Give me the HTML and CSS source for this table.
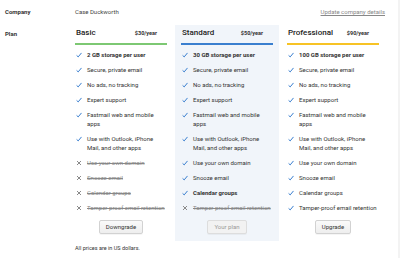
FILE: index.html
```html
<!DOCTYPE html>
<html lang="en">
<head>
    <meta charset="UTF-8">
    <meta name="viewport" content="width=device-width, initial-scale=1.0">
    <title>Plan - Fastmail</title>
    <link rel="stylesheet" href="styles.css">
</head>
<body>
    <div class="page">
        <div class="content">
            <div class="row company-row">
                <div class="label">Company</div>
                <div class="value">Case Duckworth</div>
                <a class="update-link" href="#">Update company details</a>
            </div>

            <div class="row plan-row">
                <div class="label plan-label">Plan</div>
                <div class="plans">
                    <div class="plan basic">
                        <div class="plan-head">
                            <span class="plan-name">Basic</span>
                            <span class="plan-price">$30/year</span>
                        </div>
                        <ul class="features">
                            <li class="yes strong"><svg viewBox="0 0 6 6"><path d="M0.6 3.4 L2.2 4.9 L5.5 0.9"/></svg>2 GB storage per user</li>
                            <li class="yes"><svg viewBox="0 0 6 6"><path d="M0.6 3.4 L2.2 4.9 L5.5 0.9"/></svg>Secure, private email</li>
                            <li class="yes"><svg viewBox="0 0 6 6"><path d="M0.6 3.4 L2.2 4.9 L5.5 0.9"/></svg>No ads, no tracking</li>
                            <li class="yes"><svg viewBox="0 0 6 6"><path d="M0.6 3.4 L2.2 4.9 L5.5 0.9"/></svg>Expert support</li>
                            <li class="yes"><svg viewBox="0 0 6 6"><path d="M0.6 3.4 L2.2 4.9 L5.5 0.9"/></svg><span>Fastmail web and mobile<br>apps</span></li>
                            <li class="yes"><svg viewBox="0 0 6 6"><path d="M0.6 3.4 L2.2 4.9 L5.5 0.9"/></svg><span>Use with Outlook, iPhone<br>Mail, and other apps</span></li>
                            <li class="no"><svg viewBox="0 0 6 6"><path d="M1 1 L5 5 M5 1 L1 5"/></svg><span>Use your own domain</span></li>
                            <li class="no"><svg viewBox="0 0 6 6"><path d="M1 1 L5 5 M5 1 L1 5"/></svg><span>Snooze email</span></li>
                            <li class="no"><svg viewBox="0 0 6 6"><path d="M1 1 L5 5 M5 1 L1 5"/></svg><span>Calendar groups</span></li>
                            <li class="no"><svg viewBox="0 0 6 6"><path d="M1 1 L5 5 M5 1 L1 5"/></svg><span>Tamper-proof email retention</span></li>
                        </ul>
                        <div class="plan-action">
                            <button class="plan-button">Downgrade</button>
                        </div>
                    </div>

                    <div class="plan standard current">
                        <div class="plan-head">
                            <span class="plan-name">Standard</span>
                            <span class="plan-price">$50/year</span>
                        </div>
                        <ul class="features">
                            <li class="yes strong"><svg viewBox="0 0 6 6"><path d="M0.6 3.4 L2.2 4.9 L5.5 0.9"/></svg>30 GB storage per user</li>
                            <li class="yes"><svg viewBox="0 0 6 6"><path d="M0.6 3.4 L2.2 4.9 L5.5 0.9"/></svg>Secure, private email</li>
                            <li class="yes"><svg viewBox="0 0 6 6"><path d="M0.6 3.4 L2.2 4.9 L5.5 0.9"/></svg>No ads, no tracking</li>
                            <li class="yes"><svg viewBox="0 0 6 6"><path d="M0.6 3.4 L2.2 4.9 L5.5 0.9"/></svg>Expert support</li>
                            <li class="yes"><svg viewBox="0 0 6 6"><path d="M0.6 3.4 L2.2 4.9 L5.5 0.9"/></svg><span>Fastmail web and mobile<br>apps</span></li>
                            <li class="yes"><svg viewBox="0 0 6 6"><path d="M0.6 3.4 L2.2 4.9 L5.5 0.9"/></svg><span>Use with Outlook, iPhone<br>Mail, and other apps</span></li>
                            <li class="yes"><svg viewBox="0 0 6 6"><path d="M0.6 3.4 L2.2 4.9 L5.5 0.9"/></svg>Use your own domain</li>
                            <li class="yes"><svg viewBox="0 0 6 6"><path d="M0.6 3.4 L2.2 4.9 L5.5 0.9"/></svg>Snooze email</li>
                            <li class="yes strong"><svg viewBox="0 0 6 6"><path d="M0.6 3.4 L2.2 4.9 L5.5 0.9"/></svg>Calendar groups</li>
                            <li class="no"><svg viewBox="0 0 6 6"><path d="M1 1 L5 5 M5 1 L1 5"/></svg><span>Tamper-proof email retention</span></li>
                        </ul>
                        <div class="plan-action">
                            <button class="plan-button" disabled>Your plan</button>
                        </div>
                    </div>

                    <div class="plan professional">
                        <div class="plan-head">
                            <span class="plan-name">Professional</span>
                            <span class="plan-price">$90/year</span>
                        </div>
                        <ul class="features">
                            <li class="yes strong"><svg viewBox="0 0 6 6"><path d="M0.6 3.4 L2.2 4.9 L5.5 0.9"/></svg>100 GB storage per user</li>
                            <li class="yes"><svg viewBox="0 0 6 6"><path d="M0.6 3.4 L2.2 4.9 L5.5 0.9"/></svg>Secure, private email</li>
                            <li class="yes"><svg viewBox="0 0 6 6"><path d="M0.6 3.4 L2.2 4.9 L5.5 0.9"/></svg>No ads, no tracking</li>
                            <li class="yes"><svg viewBox="0 0 6 6"><path d="M0.6 3.4 L2.2 4.9 L5.5 0.9"/></svg>Expert support</li>
                            <li class="yes"><svg viewBox="0 0 6 6"><path d="M0.6 3.4 L2.2 4.9 L5.5 0.9"/></svg><span>Fastmail web and mobile<br>apps</span></li>
                            <li class="yes"><svg viewBox="0 0 6 6"><path d="M0.6 3.4 L2.2 4.9 L5.5 0.9"/></svg><span>Use with Outlook, iPhone<br>Mail, and other apps</span></li>
                            <li class="yes"><svg viewBox="0 0 6 6"><path d="M0.6 3.4 L2.2 4.9 L5.5 0.9"/></svg>Use your own domain</li>
                            <li class="yes"><svg viewBox="0 0 6 6"><path d="M0.6 3.4 L2.2 4.9 L5.5 0.9"/></svg>Snooze email</li>
                            <li class="yes"><svg viewBox="0 0 6 6"><path d="M0.6 3.4 L2.2 4.9 L5.5 0.9"/></svg>Calendar groups</li>
                            <li class="yes"><svg viewBox="0 0 6 6"><path d="M0.6 3.4 L2.2 4.9 L5.5 0.9"/></svg>Tamper-proof email retention</li>
                        </ul>
                        <div class="plan-action">
                            <button class="plan-button">Upgrade</button>
                        </div>
                    </div>
                </div>
            </div>

            <p class="note">All prices are in US dollars.</p>
        </div>
        <div class="sidebar"></div>
    </div>
</body>
</html>
```

FILE: styles.css
```css
* {
    margin: 0;
    padding: 0;
    box-sizing: border-box;
}

body {
    font-family: Roboto, "Liberation Sans", sans-serif;
    font-size: 6px;
    line-height: 9px;
    color: #333;
    background-color: #fff;
}

.page {
    display: flex;
    height: 100vh;
}

.content {
    flex: 1;
    padding: 7px 13px 0 5px;
}

.sidebar {
    width: 7px;
    background-color: #f3f3f3;
}

.row {
    display: flex;
}

.label {
    width: 70px;
    font-weight: bold;
    color: #333;
}

.company-row .value {
    flex: 1;
    color: #444;
}

.update-link {
    color: #888;
    text-decoration: underline;
}

.plan-row {
    margin-top: 9px;
}

.plan-label {
    width: 64px;
    padding-top: 4px;
}

.plans {
    display: grid;
    grid-template-columns: repeat(3, 104px);
    gap: 2px;
}

.plan {
    padding: 3px 6px 7px;
}

.plan.current {
    background-color: #f1f5fa;
}

.plan-head {
    display: flex;
    justify-content: space-between;
    align-items: baseline;
    padding: 0 10px 5px 1px;
    border-bottom: 2px solid #ccc;
}

.basic .plan-head {
    border-color: #7dc873;
}

.standard .plan-head {
    border-color: #3a7fcf;
}

.professional .plan-head {
    border-color: #f7c325;
}

.plan-name {
    font-size: 8px;
    line-height: 10px;
    font-weight: 500;
    color: #222;
}

.plan-price {
    font-size: 5.5px;
    font-weight: bold;
    color: #333;
}

.features {
    list-style: none;
    margin-top: 2px;
}

.features li {
    display: flex;
    align-items: flex-start;
    padding: 3px 0;
    white-space: nowrap;
}

.features svg {
    width: 6px;
    height: 6px;
    margin: 1.5px 5px 0 1px;
    flex-shrink: 0;
    fill: none;
    stroke-width: 1;
}

.features .yes svg {
    stroke: #3a7fcf;
}

.features .no {
    color: #888;
}

.features .no span {
    text-decoration: line-through;
}

.features .no svg {
    stroke: #8a8a8a;
}

.features .strong {
    font-weight: bold;
}

.plan-action {
    display: flex;
    justify-content: center;
    margin-top: 5px;
}

.plan-button {
    font-family: Roboto, "Liberation Sans", sans-serif;
    font-size: 6px;
    line-height: 12px;
    padding: 0 6px;
    color: #333;
    background: linear-gradient(#fafafa, #eee);
    border: 1px solid #d2d2d2;
    border-radius: 2px;
    box-shadow: 0 1px 0 rgba(0, 0, 0, 0.04);
    cursor: pointer;
}

.plan-button:disabled {
    color: #999;
    background: #f2f2f2;
    border-color: #ddd;
    cursor: default;
}

.note {
    margin-top: 3px;
    padding-left: 70px;
    font-size: 5.5px;
    color: #333;
}
```
